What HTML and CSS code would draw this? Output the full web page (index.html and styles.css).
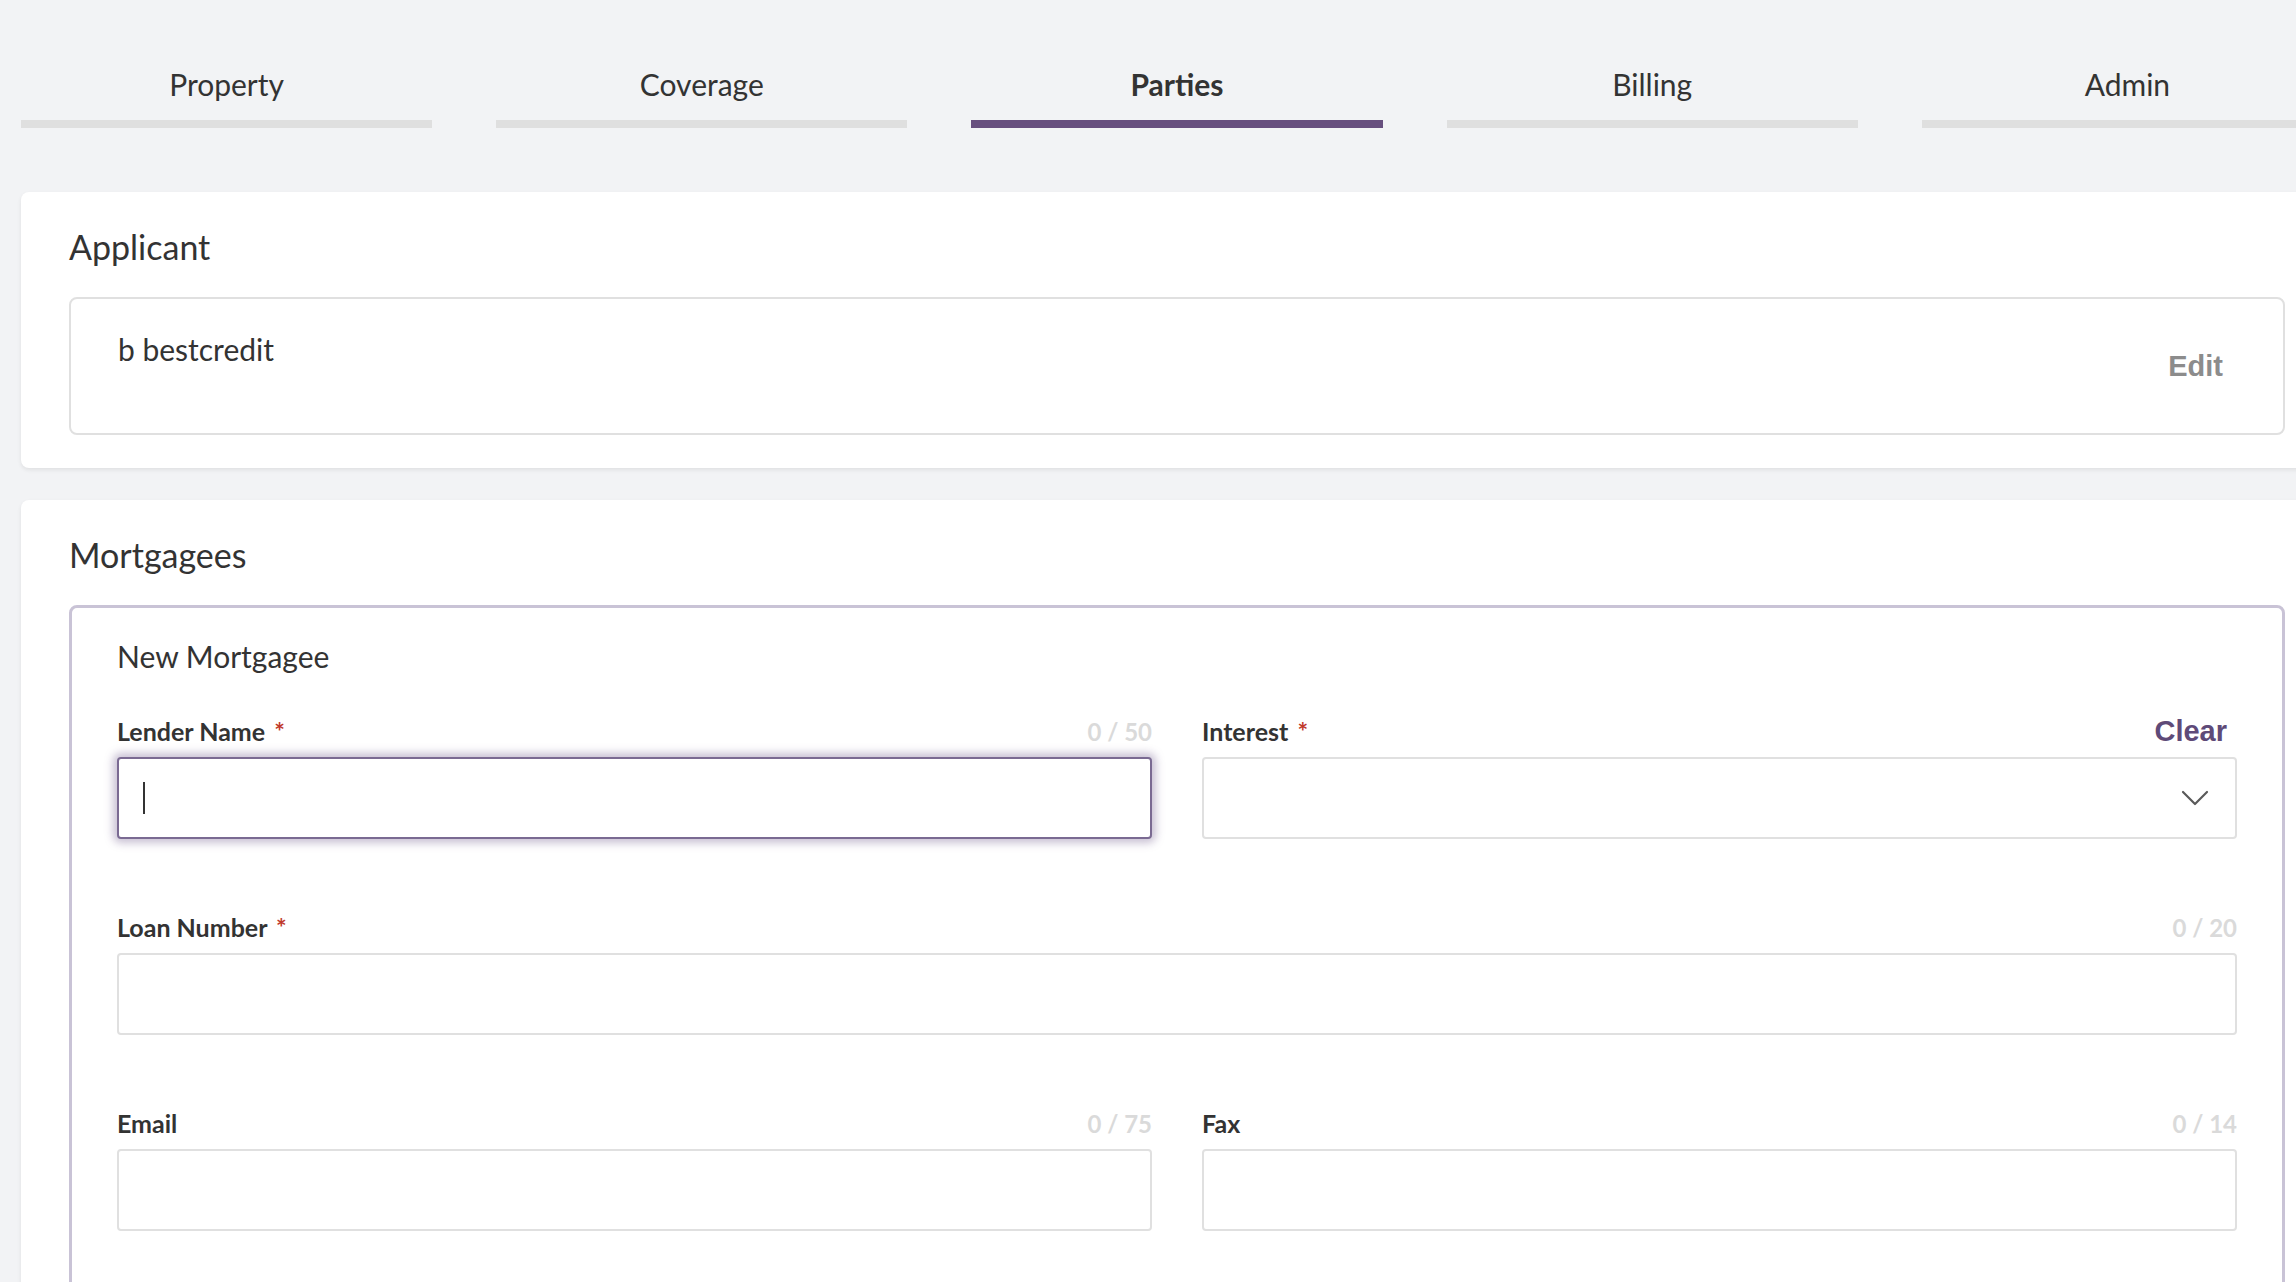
FILE: index.html
```html
<!DOCTYPE html>
<html lang="en">
<head>
<meta charset="utf-8">
<title>Parties</title>
<link rel="stylesheet" href="styles.css">
</head>
<body>
<div class="page">
  <nav class="tabs">
    <div class="tab"><span class="tab-label">Property</span><span class="tab-bar"></span></div>
    <div class="tab"><span class="tab-label">Coverage</span><span class="tab-bar"></span></div>
    <div class="tab tab-active"><span class="tab-label">Parties</span><span class="tab-bar"></span></div>
    <div class="tab"><span class="tab-label">Billing</span><span class="tab-bar"></span></div>
    <div class="tab"><span class="tab-label">Admin</span><span class="tab-bar"></span></div>
  </nav>

  <section class="card card-applicant">
    <h2 class="card-title">Applicant</h2>
    <div class="party-box">
      <div class="party-name">b bestcredit</div>
      <button class="edit-btn" type="button">Edit</button>
    </div>
  </section>

  <section class="card card-mortgagees">
    <h2 class="card-title">Mortgagees</h2>
    <div class="mortgagee-form">
      <h3 class="form-title">New Mortgagee</h3>
      <div class="form-grid">
        <div class="field">
          <div class="field-head">
            <label class="label">Lender Name <span class="req">*</span></label>
            <span class="counter">0 / 50</span>
          </div>
          <div class="input-wrap">
            <input class="input input-focused" type="text">
            <span class="caret"></span>
          </div>
        </div>
        <div class="field">
          <div class="field-head">
            <label class="label">Interest <span class="req">*</span></label>
            <span class="clear-btn">Clear</span>
          </div>
          <div class="select">
            <svg class="chevron" width="28" height="16" viewBox="0 0 28 16"><path d="M2 2 L14 14 L26 2" fill="none" stroke="#5a5a5a" stroke-width="2.2" stroke-linecap="round" stroke-linejoin="round"/></svg>
          </div>
        </div>
        <div class="field field-wide">
          <div class="field-head">
            <label class="label">Loan Number <span class="req">*</span></label>
            <span class="counter">0 / 20</span>
          </div>
          <input class="input" type="text">
        </div>
        <div class="field">
          <div class="field-head">
            <label class="label">Email</label>
            <span class="counter">0 / 75</span>
          </div>
          <input class="input" type="text">
        </div>
        <div class="field">
          <div class="field-head">
            <label class="label">Fax</label>
            <span class="counter">0 / 14</span>
          </div>
          <input class="input" type="text">
        </div>
      </div>
    </div>
  </section>
</div>
</body>
</html>
```

FILE: styles.css
```css
html, body {
  margin: 0;
  padding: 0;
  overflow: hidden;
  height: 100%;
}

body {
  background: #f2f3f5;
  font-family: Lato, "Open Sans", "Liberation Sans", sans-serif;
  color: #333333;
}

.page {
  width: 2312px;
  margin-left: 21px;
  padding-top: 66px;
}

.tabs {
  display: grid;
  grid-template-columns: repeat(5, 1fr);
  column-gap: 64px;
  margin-bottom: 64px;
}

.tab {
  display: flex;
  flex-direction: column;
  align-items: center;
}

.tab-label {
  font-size: 30px;
  line-height: 36px;
  color: #333333;
  margin-bottom: 18px;
}

.tab-bar {
  display: block;
  width: 100%;
  height: 8px;
  background: #dfdfdf;
}

.tab-active .tab-label {
  font-weight: 700;
}

.tab-active .tab-bar {
  background: #674f7e;
}

.card {
  background: #ffffff;
  border-radius: 8px;
  box-shadow: 0 2px 4px rgba(0, 0, 0, 0.08);
  padding: 35px 48px 33px;
  margin-bottom: 32px;
}

.card-title {
  margin: 0 0 29px;
  font-size: 34px;
  line-height: 40.8px;
  font-weight: 400;
  color: #333333;
}

.party-box {
  height: 138px;
  box-sizing: border-box;
  border: 2px solid #e0e0e0;
  border-radius: 8px;
  display: flex;
  justify-content: space-between;
  align-items: center;
  padding: 0 60px 0 47px;
}

.party-name {
  align-self: flex-start;
  padding-top: 32px;
  font-size: 30px;
  line-height: 36px;
  color: #333333;
}

.edit-btn {
  border: 0;
  background: none;
  padding: 0;
  font-family: "Liberation Sans", Arial, sans-serif;
  font-weight: 700;
  font-size: 29px;
  line-height: 34px;
  color: #8c8c8c;
  cursor: pointer;
}

.card-mortgagees {
  padding-bottom: 80px;
}

.mortgagee-form {
  border: 3px solid #c9c3d6;
  border-radius: 8px;
  padding: 30px 45px 40px;
}

.form-title {
  margin: 0 0 42px;
  font-size: 30px;
  line-height: 36px;
  font-weight: 400;
  color: #333333;
}

.form-grid {
  display: grid;
  grid-template-columns: 1fr 1fr;
  column-gap: 50px;
}

.field {
  margin-bottom: 73px;
}

.field-wide {
  grid-column: 1 / -1;
}

.field-head {
  display: flex;
  justify-content: space-between;
  align-items: baseline;
  height: 30px;
  margin-bottom: 11px;
}

.label {
  font-size: 25px;
  line-height: 30px;
  font-weight: 700;
  color: #333333;
}

.req {
  color: #c0392b;
  margin-left: 3px;
}

.counter {
  font-size: 24px;
  line-height: 30px;
  font-weight: 700;
  color: #dadada;
}

.clear-btn {
  font-family: "Liberation Sans", Arial, sans-serif;
  font-size: 29px;
  line-height: 30px;
  font-weight: 700;
  color: #5e4a78;
  margin-right: 10px;
}

.input-wrap {
  position: relative;
}

.input {
  display: block;
  width: 100%;
  height: 82px;
  box-sizing: border-box;
  border: 2px solid #e0e0e0;
  border-radius: 4px;
  background: #ffffff;
  padding: 0 24px;
  font-family: inherit;
  font-size: 28px;
  outline: none;
}

.input-focused {
  border-color: #7a6a92;
  box-shadow: 0 0 8px 4px rgba(125, 105, 150, 0.42);
}

.caret {
  position: absolute;
  left: 26px;
  top: 25px;
  width: 2px;
  height: 32px;
  background: #333333;
}

.select {
  height: 82px;
  box-sizing: border-box;
  border: 2px solid #e0e0e0;
  border-radius: 4px;
  background: #ffffff;
  display: flex;
  justify-content: flex-end;
  align-items: center;
  padding-right: 26px;
}

.chevron {
  display: block;
}
```
